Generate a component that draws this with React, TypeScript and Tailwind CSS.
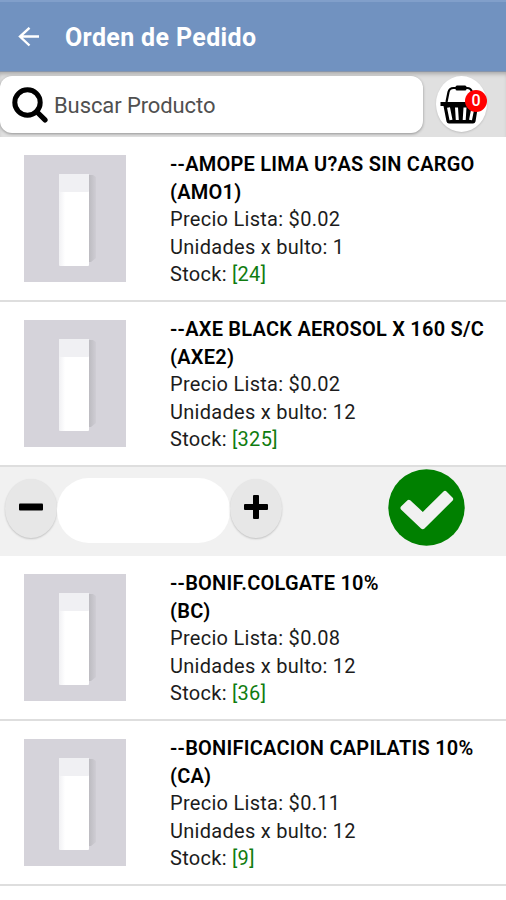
import React, { useState } from 'react';

interface Product {
  name: string;
  code: string;
  price: string;
  units: number;
  stock: number;
}

const PRODUCTS: Product[] = [
  { name: '--AMOPE LIMA U?AS SIN CARGO', code: 'AMO1', price: '0.02', units: 1, stock: 24 },
  { name: '--AXE BLACK AEROSOL X 160 S/C', code: 'AXE2', price: '0.02', units: 12, stock: 325 },
  { name: '--BONIF.COLGATE 10%', code: 'BC', price: '0.08', units: 12, stock: 36 },
  { name: '--BONIFICACION CAPILATIS 10%', code: 'CA', price: '0.11', units: 12, stock: 9 },
];

// ─── Icons ───────────────────────────────────────────────────────────────────

const BackIcon = () => (
  <svg width="22" height="20" viewBox="0 0 22 20" fill="none" stroke="#fff" strokeWidth="2.4">
    <path d="M21 9.5H2M11.5 .8L2 9.5l9.5 9" />
  </svg>
);

const SearchIcon = () => (
  <svg width="37" height="37" viewBox="0 0 37 37" fill="none" stroke="#000">
    <circle cx="15.5" cy="16.5" r="12.7" strokeWidth="5" />
    <path d="M24.5 25.5L33 33.9" strokeWidth="5.2" strokeLinecap="round" />
  </svg>
);

const BasketIcon = () => (
  <svg width="42" height="40" viewBox="0 0 42 40" fill="none">
    <path d="M6.5 18L8.5 8Q9.5 4 13.5 4H27Q31 4 32 8L34 18" stroke="#000" strokeWidth="2.2" />
    <rect x="15.5" y="1.5" width="11" height="5" rx="1.5" fill="#000" />
    <path d="M.5 18h40v4h-2.5L35.5 37.5q-.5 2-2.5 2H9q-2 0-2.500-2L3.500 22H.5z" fill="#000" />
    <path d="M8.500 23.500l2.500 12.500M16.500 23.500l.8 12.500M25 23.500l-.8 12.500M33 23.500l-2.500 12.500" stroke="#fff" strokeWidth="3" />
  </svg>
);

const CheckIcon = () => (
  <svg width="77" height="77" viewBox="0 0 77 77">
    <circle cx="38.5" cy="38.5" r="38.2" fill="#008000" />
    <path
      d="M13 40.5Q11.8 39 13 37.5L19.5 31.2Q20.8 30.2 22.2 31.2L34.8 42.9L55.5 22.4Q57 21.2 58.5 22.4L64.7 28.7Q65.8 30 64.7 31.5L36.5 59.5Q34.7 61 33 59.5Z"
      fill="#f1f1f1"
    />
  </svg>
);

const ProductThumb = () => (
  <svg className="shrink-0" width="102" height="127" viewBox="0 0 102 127">
    <defs>
      <linearGradient id="side" x1="0" x2="1">
        <stop offset="0" stopColor="#b7b6bb" />
        <stop offset="1" stopColor="#cfcdd4" />
      </linearGradient>
      <linearGradient id="body" x1="0" x2="1">
        <stop offset="0" stopColor="#f1f1f4" />
        <stop offset="0.2" stopColor="#fff" />
        <stop offset="1" stopColor="#fff" />
      </linearGradient>
    </defs>
    <rect width="102" height="127" fill="#d5d3da" />
    <path d="M63 20h6l3 2v81l-5 4h-4z" fill="url(#side)" />
    <rect x="35" y="19" width="30" height="92" rx="1" fill="url(#body)" />
    <rect x="35" y="19" width="30" height="18" rx="1" fill="#f0f0f3" />
  </svg>
);

// ─── Rows ────────────────────────────────────────────────────────────────────

const ProductRow: React.FC<{ product: Product }> = ({ product }) => (
  <li className="flex h-[165px] gap-[44px] border-b-2 border-[#dedede] bg-white pt-[18px] pl-6">
    <ProductThumb />
    <div className="-mt-1 text-[20px] leading-[27.5px] tracking-[0.28px] whitespace-nowrap text-[#1c1c1c]">
      <h2 className="font-semibold tracking-[0.24px] text-black">{product.name}</h2>
      <p className="font-semibold tracking-[0.24px] text-black">({product.code})</p>
      <p>Precio Lista: ${product.price}</p>
      <p>Unidades x bulto: {product.units}</p>
      <p>
        Stock: <span className="text-[#107c10]">[{product.stock}]</span>
      </p>
    </div>
  </li>
);

const QuantityBar = () => {
  const [qty, setQty] = useState('');
  const step = (n: number) => setQty(q => String(Math.max(0, Number(q) + n)));
  const round =
    'flex h-[59px] w-[52px] items-center justify-center rounded-[50%] bg-[#e7e7e7] pb-1 shadow-[0_1px_2px_rgba(0,0,0,0.2)]';

  return (
    <li className="flex h-[89px] items-start bg-[#f1f1f1] pl-[5px]">
      <div className="flex pt-[12px]">
        <button className={round} onClick={() => step(-1)} aria-label="Menos">
          <svg width="26" height="26" viewBox="0 0 26 26">
            <rect x="1" y="9.5" width="24" height="7" rx="1" />
          </svg>
        </button>
        <input
          className="-mt-px h-[65px] w-[173px] rounded-[32px] bg-white text-center text-xl outline-none"
          value={qty}
          onChange={e => setQty(e.target.value)}
          aria-label="Cantidad"
        />
        <button className={round} onClick={() => step(1)} aria-label="Más">
          <svg width="26" height="26" viewBox="0 0 26 26">
            <path d="M10 2q0-1 1-1h4q1 0 1 1v8h8q1 0 1 1v4q0 1-1 1h-8v8q0 1-1 1h-4q-1 0-1-1v-8H2q-1 0-1-1v-4q0-1 1-1h8z" />
          </svg>
        </button>
      </div>
      <button className="ml-[106px] pt-[2px]" aria-label="Confirmar">
        <CheckIcon />
      </button>
    </li>
  );
};

// ─── Screen ──────────────────────────────────────────────────────────────────

export default function App() {
  return (
    <div className="h-[900px] w-[506px] overflow-hidden bg-white font-['Roboto',sans-serif]">
      <header className="flex h-[72px] items-center gap-[25px] border-t-2 border-b border-t-[#819fca] border-b-[#8795ab] bg-[#7192c0] pl-[18px] pt-[2px]">
        <button className="-mt-[2px]" aria-label="Volver">
          <BackIcon />
        </button>
        <h1 className="text-[25px] font-bold tracking-[0.36px] text-white">Orden de Pedido</h1>
      </header>

      <div className="flex h-[65px] items-start bg-[#e0e0e0] pt-1 shadow-[inset_0_4px_4px_-2px_rgba(0,0,0,0.25)]">
        <label className="flex h-[57px] w-[423px] items-center gap-[5px] rounded-xl bg-white pl-3 shadow-[0_1px_3px_rgba(0,0,0,0.35)]">
          <SearchIcon />
          <input
            className="w-[340px] pt-px text-[22px] tracking-[-0.1px] text-[#444] outline-none placeholder:text-[#505050]"
            placeholder="Buscar Producto"
          />
        </label>
        <button
          className="relative ml-[13px] flex h-[56px] w-[51px] items-center justify-center rounded-[50%] bg-white pr-[2px] shadow-[0_1px_2px_rgba(0,0,0,0.15)]"
          aria-label="Carrito"
        >
          <BasketIcon />
          <span className="absolute top-[14px] left-[29px] flex h-[22px] w-[22px] items-center justify-center rounded-full bg-[#f00] text-[16px] font-medium text-white">
            0
          </span>
        </button>
      </div>

      <ul>
        {PRODUCTS.map((p, i) => (
          <React.Fragment key={p.code}>
            <ProductRow product={p} />
            {i === 1 && <QuantityBar />}
          </React.Fragment>
        ))}
      </ul>
    </div>
  );
}
